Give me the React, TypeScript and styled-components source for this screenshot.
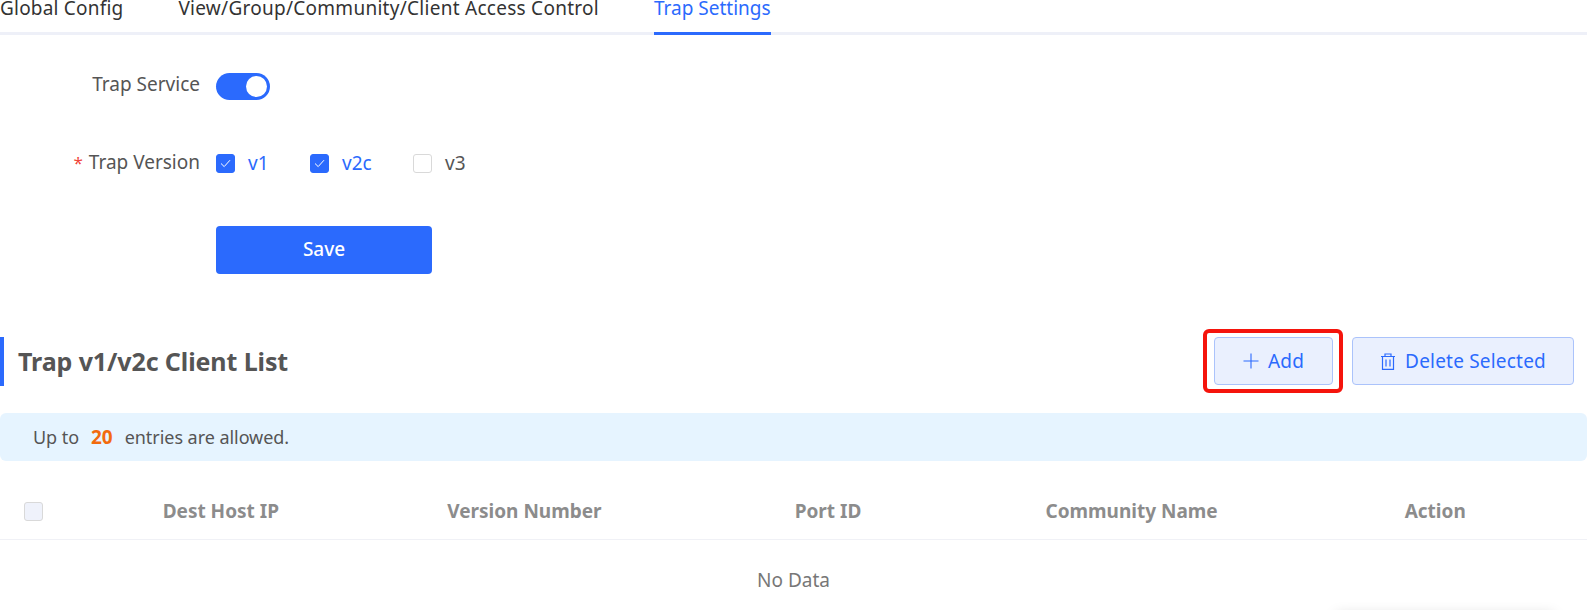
import React from 'react';
import styled, { createGlobalStyle } from 'styled-components';

const PRIMARY = '#2b6afd';
const FONT = '"Noto Sans", "Open Sans", sans-serif';

const GlobalStyle = createGlobalStyle`
  html, body {
    margin: 0;
    padding: 0;
    background: #fff;
    overflow: hidden;
  }
  body {
    font-family: ${FONT};
    font-size: 19px;
    color: #555;
  }
`;

const Page = styled.div`
  position: relative;
  width: 1587px;
  height: 610px;
  overflow: hidden;
`;

const Tabs = styled.div`
  display: flex;
  height: 32px;
  border-bottom: 3px solid #eef0f8;
  gap: 55px;
`;

const Tab = styled.div<{ $active?: boolean; $spacing?: number }>`
  height: 35px;
  line-height: 17px;
  font-size: 19px;
  letter-spacing: ${p => p.$spacing ?? 0.2}px;
  box-sizing: border-box;
  color: ${p => (p.$active ? PRIMARY : '#333')};
  border-bottom: 3px solid ${p => (p.$active ? PRIMARY : 'transparent')};
`;

const Form = styled.div`
  display: flex;
  flex-direction: column;
`;

const FormRow = styled.div<{ $top: number }>`
  display: flex;
  align-items: center;
  gap: 16px;
  margin-top: ${p => p.$top}px;
`;

const Label = styled.div<{ $lift?: number }>`
  width: 200px;
  text-align: right;
  font-size: 19px;
  line-height: 20px;
  padding-bottom: ${p => p.$lift ?? 0}px;
  color: #555;
`;

const Required = styled.span`
  color: #f0453a;
  font-size: 17px;
  margin-right: 6px;
`;

const Switch = styled.div`
  position: relative;
  width: 54px;
  height: 27px;
  border-radius: 14px;
  background: ${PRIMARY};

  &::after {
    content: '';
    position: absolute;
    top: 3px;
    right: 3px;
    width: 21px;
    height: 21px;
    border-radius: 50%;
    background: #fff;
  }
`;

const CheckGroup = styled.div`
  display: flex;
  align-items: center;
`;

const Check = styled.div<{ $on?: boolean; $width: number }>`
  display: flex;
  align-items: center;
  gap: 13px;
  width: ${p => p.$width}px;
  height: 26px;
  box-sizing: border-box;
  padding-bottom: 2px;
  font-size: 19px;
  color: ${p => (p.$on ? PRIMARY : '#555')};
`;

const Box = styled.span<{ $on?: boolean }>`
  display: inline-flex;
  align-items: center;
  justify-content: center;
  width: 19px;
  height: 19px;
  margin-top: 1px;
  box-sizing: border-box;
  border-radius: 3px;
  background: ${p => (p.$on ? PRIMARY : '#fff')};
  border: 1px solid ${p => (p.$on ? PRIMARY : '#d9d9d9')};
`;

const SaveRow = styled.div`
  padding-left: 216px;
  margin-top: 49px;
`;

const SaveButton = styled.button`
  display: block;
  width: 216px;
  height: 48px;
  margin: 0;
  padding: 0 0 2px;
  border: 0;
  border-radius: 4px;
  background: ${PRIMARY};
  color: #fff;
  font-family: ${FONT};
  font-size: 19px;
  font-weight: 500;
`;

const ListHeader = styled.div`
  display: flex;
  align-items: flex-start;
  justify-content: space-between;
  margin-top: 63px;
  height: 49px;
  padding-right: 13px;
`;

const Title = styled.h2`
  margin: 0;
  height: 49px;
  line-height: 49px;
  border-left: 4px solid ${PRIMARY};
  padding-left: 14px;
  font-size: 25px;
  font-weight: 700;
  letter-spacing: -0.1px;
  color: #555;
`;

const Actions = styled.div`
  display: flex;
  gap: 19px;
`;

const GhostButton = styled.button<{ $width: number }>`
  position: relative;
  display: flex;
  align-items: center;
  justify-content: center;
  gap: 9px;
  width: ${p => p.$width}px;
  height: 48px;
  margin: 0;
  padding: 0;
  box-sizing: border-box;
  border: 1px solid #abc3fb;
  border-radius: 4px;
  background: #eaf0fe;
  color: ${PRIMARY};
  font-family: ${FONT};
  font-size: 19px;
  letter-spacing: 0.2px;
`;

const Highlight = styled.span`
  position: absolute;
  top: -9px;
  left: -12px;
  right: -11px;
  bottom: -9px;
  border: 4px solid #f5140c;
  border-radius: 6px;
  pointer-events: none;
`;

const Notice = styled.div`
  margin-top: 27px;
  height: 48px;
  line-height: 48px;
  padding-left: 33px;
  background: #e6f4ff;
  border-radius: 6px;
  font-size: 18px;
  letter-spacing: -0.05px;
  color: #555;
`;

const Count = styled.b`
  color: #f26a0e;
  font-size: 19px;
  margin: 0 12px;
`;

const TableHead = styled.div`
  display: grid;
  grid-template-columns: 69px repeat(5, 1fr);
  align-items: center;
  margin-top: 22px;
  height: 56px;
  border-bottom: 1px solid #f0f1f6;
`;

const HeadCell = styled.div`
  text-align: center;
  font-size: 19px;
  font-weight: 700;
  color: #8c8c8c;
`;

const HeadCheck = styled.span`
  display: block;
  width: 19px;
  height: 19px;
  margin-left: 24px;
  box-sizing: border-box;
  background: #eff2fb;
  border: 1px solid #d9d9d9;
  border-radius: 3px;
`;

const Empty = styled.div`
  text-align: center;
  font-size: 19px;
  color: #777;
  margin-top: 27px;
`;

// popup whose shadow just shows at the bottom edge of the shot
const PopupShadow = styled.div`
  position: absolute;
  top: 614px;
  left: 1336px;
  width: 218px;
  height: 40px;
  background: #fff;
  box-shadow: 0 0 14px rgba(0, 0, 0, 0.14);
`;

const CheckMark = () => (
  <svg width="11" height="9" viewBox="0 0 11 9" fill="none">
    <path d="M1 4.5 4.2 7.6 10 1.2" stroke="#fff" strokeWidth="1" />
  </svg>
);

const PlusIcon = () => (
  <svg width="16" height="16" viewBox="0 0 16 16" fill="none" stroke={PRIMARY} strokeWidth="1.1">
    <path d="M8 .5v15M.5 8h15" />
  </svg>
);

const TrashIcon = () => (
  <svg width="16" height="17" viewBox="0 0 16 17" fill="none" stroke={PRIMARY} strokeWidth="1.2">
    <path d="M1 3.5h14M5 3.5V1h6v2.5M2.5 3.5v12.8h11V3.5M6 6.5v7M10 6.5v7" />
  </svg>
);

const COLUMNS = ['Dest Host IP', 'Version Number', 'Port ID', 'Community Name', 'Action'];

export default function App() {
  return (
    <Page>
      <GlobalStyle />
      <Tabs>
        <Tab>Global Config</Tab>
        <Tab $spacing={0.27}>View/Group/Community/Client Access Control</Tab>
        <Tab $active $spacing={0}>Trap Settings</Tab>
      </Tabs>

      <Form>
        <FormRow $top={38}>
          <Label $lift={6}>Trap Service</Label>
          <Switch />
        </FormRow>
        <FormRow $top={51}>
          <Label $lift={3}><Required>*</Required>Trap Version</Label>
          <CheckGroup>
            <Check $on $width={94}><Box $on><CheckMark /></Box>v1</Check>
            <Check $on $width={103}><Box $on><CheckMark /></Box>v2c</Check>
            <Check $width={70}><Box />v3</Check>
          </CheckGroup>
        </FormRow>
        <SaveRow><SaveButton>Save</SaveButton></SaveRow>
      </Form>

      <ListHeader>
        <Title>Trap v1/v2c Client List</Title>
        <Actions>
          <GhostButton $width={119}><PlusIcon />Add<Highlight /></GhostButton>
          <GhostButton $width={222}><TrashIcon />Delete Selected</GhostButton>
        </Actions>
      </ListHeader>

      <Notice>Up to<Count>20</Count>entries are allowed.</Notice>

      <TableHead>
        <HeadCheck />
        {COLUMNS.map(c => <HeadCell key={c}>{c}</HeadCell>)}
      </TableHead>
      <Empty>No Data</Empty>
      <PopupShadow />
    </Page>
  );
}
